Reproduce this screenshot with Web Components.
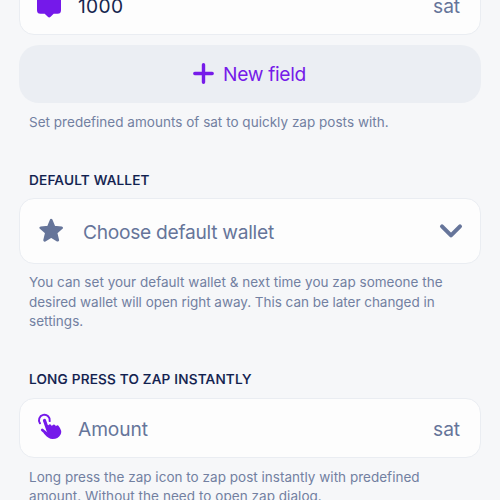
<!DOCTYPE html>
<html lang="en">
<head>
<meta charset="utf-8">
<title>Zap settings</title>
<style>
html, body { margin: 0; height: 100%; overflow: hidden; background: #f6f7f9; }
</style>
</head>
<body>
<zap-settings></zap-settings>
<script>
function define(name, html) {
  const t = document.createElement('template');
  t.innerHTML = html;
  customElements.define(name, class extends HTMLElement {
    constructor() {
      super();
      this.attachShadow({ mode: 'open' }).append(t.content.cloneNode(true));
    }
  });
}

define('field-card', `
<style>
:host { display: flex; align-items: center; box-sizing: border-box; height: 60px; padding: 0 20px 0 18px;
  border: 1px solid #eaedf2; border-radius: 15px; background: #fdfdfd; color: #66759a; }
.label { flex: 1; white-space: nowrap; padding-top: 2px; }
::slotted(svg) { display: block; flex: none; }
::slotted(span[slot="end"]) { padding-top: 2px; }
</style>
<slot name="icon"></slot><span class="label"><slot></slot></span><slot name="end"></slot>`);

define('add-button', `
<style>
:host { display: flex; align-items: center; justify-content: center; gap: 9px; box-sizing: border-box; height: 58px; padding-right: 1px;
  border-radius: 20px; background: #ebeef3; color: #761be9; white-space: nowrap; }
svg { display: block; margin-top: -1px; }
span { letter-spacing: -.33px; }
</style>
<svg width="21" height="21" viewBox="0 0 21 21"><path d="M10.5 1.8v17.4M1.8 10.5h17.4" fill="none" stroke="#761be9" stroke-width="3.4" stroke-linecap="round"/></svg>
<span><slot></slot></span>`);

define('section-title', `
<style>
:host { display: block; padding-left: 10px; font-size: 13.6px; line-height: 18px; font-weight: 500; letter-spacing: .19px; color: #10204e; white-space: nowrap;
  -webkit-text-stroke: .15px #10204e; }
</style>
<slot></slot>`);

define('help-text', `
<style>
:host { display: block; padding-left: 10px; font-size: 13.5px; line-height: 19.3px; letter-spacing: .02px; color: #7280a1; white-space: nowrap; }
</style>
<slot></slot>`);

define('zap-settings', `
<style>
:host { display: flex; flex-direction: column; box-sizing: border-box; width: 500px; height: 500px; overflow: hidden;
  padding: 0 19px; background: #f6f7f9; font: 400 19.2px/26px Inter, sans-serif; }
field-card, add-button, section-title, help-text { flex: none; }
.first { margin-top: -25px; }
.value { color: #16264f; letter-spacing: .3px; }
.choose { letter-spacing: -.28px; }
.name, [slot="end"] { letter-spacing: -.1px; }
.tight { letter-spacing: -.03px; }
.loose { letter-spacing: .05px; }
add-button { margin-top: 10px; }
help-text { margin-top: 10px; }
help-text.wallet-help { margin-top: 9.3px; }
section-title { margin-top: 38.7px; }
section-title.last { margin-top: 38.8px; }
field-card.amount { margin-top: 10px; }
field-card.wallet { margin-top: 9px; height: 66px; padding-left: 19px; padding-right: 17px; }
</style>
<field-card class="first">
  <svg slot="icon" width="40" height="36" viewBox="0 3.3 40 36" overflow="visible"><path d="M-1 0H20Q23 0 23 3V26.5Q23 30 19.5 30H15.7L12.6 33Q11.2 34.4 9.8 33L6.7 30H2.5Q-1 30-1 26.5Z" fill="#7519ea"/></svg>
  <span class="value">1000</span><span slot="end">sat</span>
</field-card>
<add-button>New field</add-button>
<help-text>Set predefined amounts of sat to quickly zap posts with.</help-text>
<section-title>DEFAULT WALLET</section-title>
<field-card class="wallet">
  <svg slot="icon" width="44" height="28" viewBox="0 0 44 28"><path d="M12.2 3.3L15.1 10.2 22.6 10.8 16.9 15.7 18.7 23.2 12.2 19.2 5.7 23.2 7.5 15.7 1.8 10.8 9.3 10.2Z" fill="#66759a" stroke="#66759a" stroke-width="2.8" stroke-linejoin="round"/></svg>
  <span class="choose">Choose default wallet</span>
  <svg slot="end" width="24" height="24" viewBox="0 0 24 24"><path d="M3 7.4L12 16.4 21 7.4" fill="none" stroke="#66759a" stroke-width="4" stroke-linecap="round" stroke-linejoin="round"/></svg>
</field-card>
<help-text class="wallet-help">You can set your default wallet &amp; next time you zap someone the<br><span class="tight">desired wallet will open right away. This can be later changed in</span><br>settings.</help-text>
<section-title class="last">LONG PRESS TO ZAP INSTANTLY</section-title>
<field-card class="amount">
  <svg slot="icon" width="40" height="30" viewBox="38 412.7 40 30" overflow="visible"><g fill="none" stroke="#7519ea" stroke-linecap="round"><path d="M40 423A5.4 5.4 0 1 1 49.7 420.8" stroke-width="2"/><path d="M44.5 420.2L48.3 431" stroke-width="3.2"/><path d="M42.3 429.7L47.5 434" stroke-width="2.8"/></g><path d="M46.1 424.5L48.4 424.9Q49.6 423.5 51 424.4L51.8 425.8L52.5 424.9Q54 423.4 55.3 425L55.9 425.9Q57.6 424 58.8 425.9Q62.4 430.4 60.6 434.2Q58 438.8 52.5 438.7Q48.3 438.4 45 434.4L43.6 432.6L48 432Z" fill="#7519ea"/></svg>
  <span class="name">Amount</span><span slot="end">sat</span>
</field-card>
<help-text>Long press the zap icon to zap post instantly with predefined<br><span class="loose">amount. Without the need to open zap dialog.</span></help-text>`);
</script>
</body>
</html>
